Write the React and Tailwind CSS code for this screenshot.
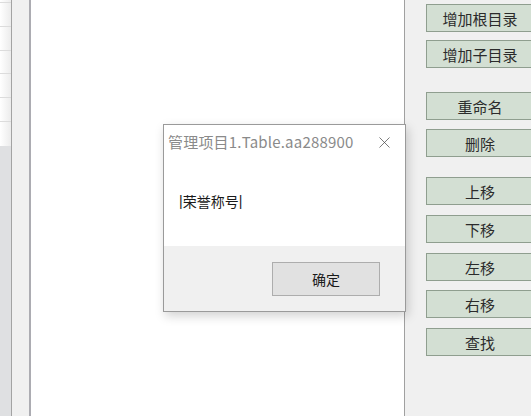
import { X } from 'lucide-react';

const font = { fontFamily: '"Noto Sans CJK SC", "Liberation Sans", sans-serif' };

function SideButton({ label, className = '' }) {
  return (
    <button
      className={`w-[108px] h-[28px] shrink-0 border border-[#8f9e8f] bg-[#d3dfd3] text-[15px] leading-none text-[#2b2b2b] flex items-center justify-center ${className}`}
    >
      {label}
    </button>
  );
}

export default function App() {
  return (
    <div className="relative w-[531px] h-[416px] overflow-hidden bg-white" style={font}>
      <div className="flex h-full">
        {/* left grid strip */}
        <div className="w-[11px] flex flex-col border-r border-[#a3a3a3] box-content">
          <div className="flex-1 max-h-[146px] bg-gradient-to-r from-white to-[#ececec]">
            <div className="h-[3px] border-b border-[#dcdcdc]" />
            <div className="h-[24px] border-b border-[#dcdcdc]" />
            <div className="h-[24px] border-b border-[#dcdcdc]" />
            <div className="h-[23px] border-b border-[#dcdcdc]" />
            <div className="h-[24px] border-b border-[#dcdcdc]" />
            <div className="h-[24px] border-b border-[#dcdcdc]" />
          </div>
          <div className="flex-1 bg-[#dfe0e2]" />
        </div>
        <div className="w-[17px] bg-[#f0f0f0] border-r-2 border-[#acacb2] box-content" />
        {/* main white area */}
        <div className="flex-1 bg-white border-r border-[#a0a0a0]" />
        {/* right button panel */}
        <div className="w-[126px] bg-[#f0f0f0] pl-[21px] pt-[4px] flex flex-col">
          <SideButton label="增加根目录" />
          <SideButton label="增加子目录" className="mt-[8px]" />
          <SideButton label="重命名" className="mt-[24px]" />
          <SideButton label="删除" className="mt-[9px]" />
          <SideButton label="上移" className="mt-[20px]" />
          <SideButton label="下移" className="mt-[10px]" />
          <SideButton label="左移" className="mt-[10px]" />
          <SideButton label="右移" className="mt-[9px]" />
          <SideButton label="查找" className="mt-[10px]" />
        </div>
      </div>

      {/* message dialog */}
      <div className="absolute left-[163px] top-[124px] w-[243px] h-[188px] border border-[#9a9a9a] bg-white flex flex-col shadow-[2px_4px_10px_rgba(0,0,0,0.18)]">
        <div className="h-[34px] flex items-center justify-between pl-[4px] pr-[11px] pt-[1px]">
          <span className="text-[15px] text-[#8a8a8a] whitespace-nowrap tracking-[0.2px]">管理项目1.Table.aa288900</span>
          <X size={19} strokeWidth={0.9} color="#444" />
        </div>
        <div className="flex-1 pl-[15px] pt-[32px] text-[14px] text-[#1a1a1a] flex items-start">
          <span className="font-['Liberation_Sans'] text-[#222]">|</span>
          <span>荣誉称号</span>
          <span className="font-['Liberation_Sans'] text-[#222]">|</span>
        </div>
        <div className="h-[65px] bg-[#f0f0f0] flex items-start justify-end pr-[25px] pt-[16px]">
          <button className="w-[108px] h-[34px] border border-[#adadad] bg-[#e1e1e1] text-[14px] text-[#1a1a1a]">
            确定
          </button>
        </div>
      </div>
    </div>
  );
}
